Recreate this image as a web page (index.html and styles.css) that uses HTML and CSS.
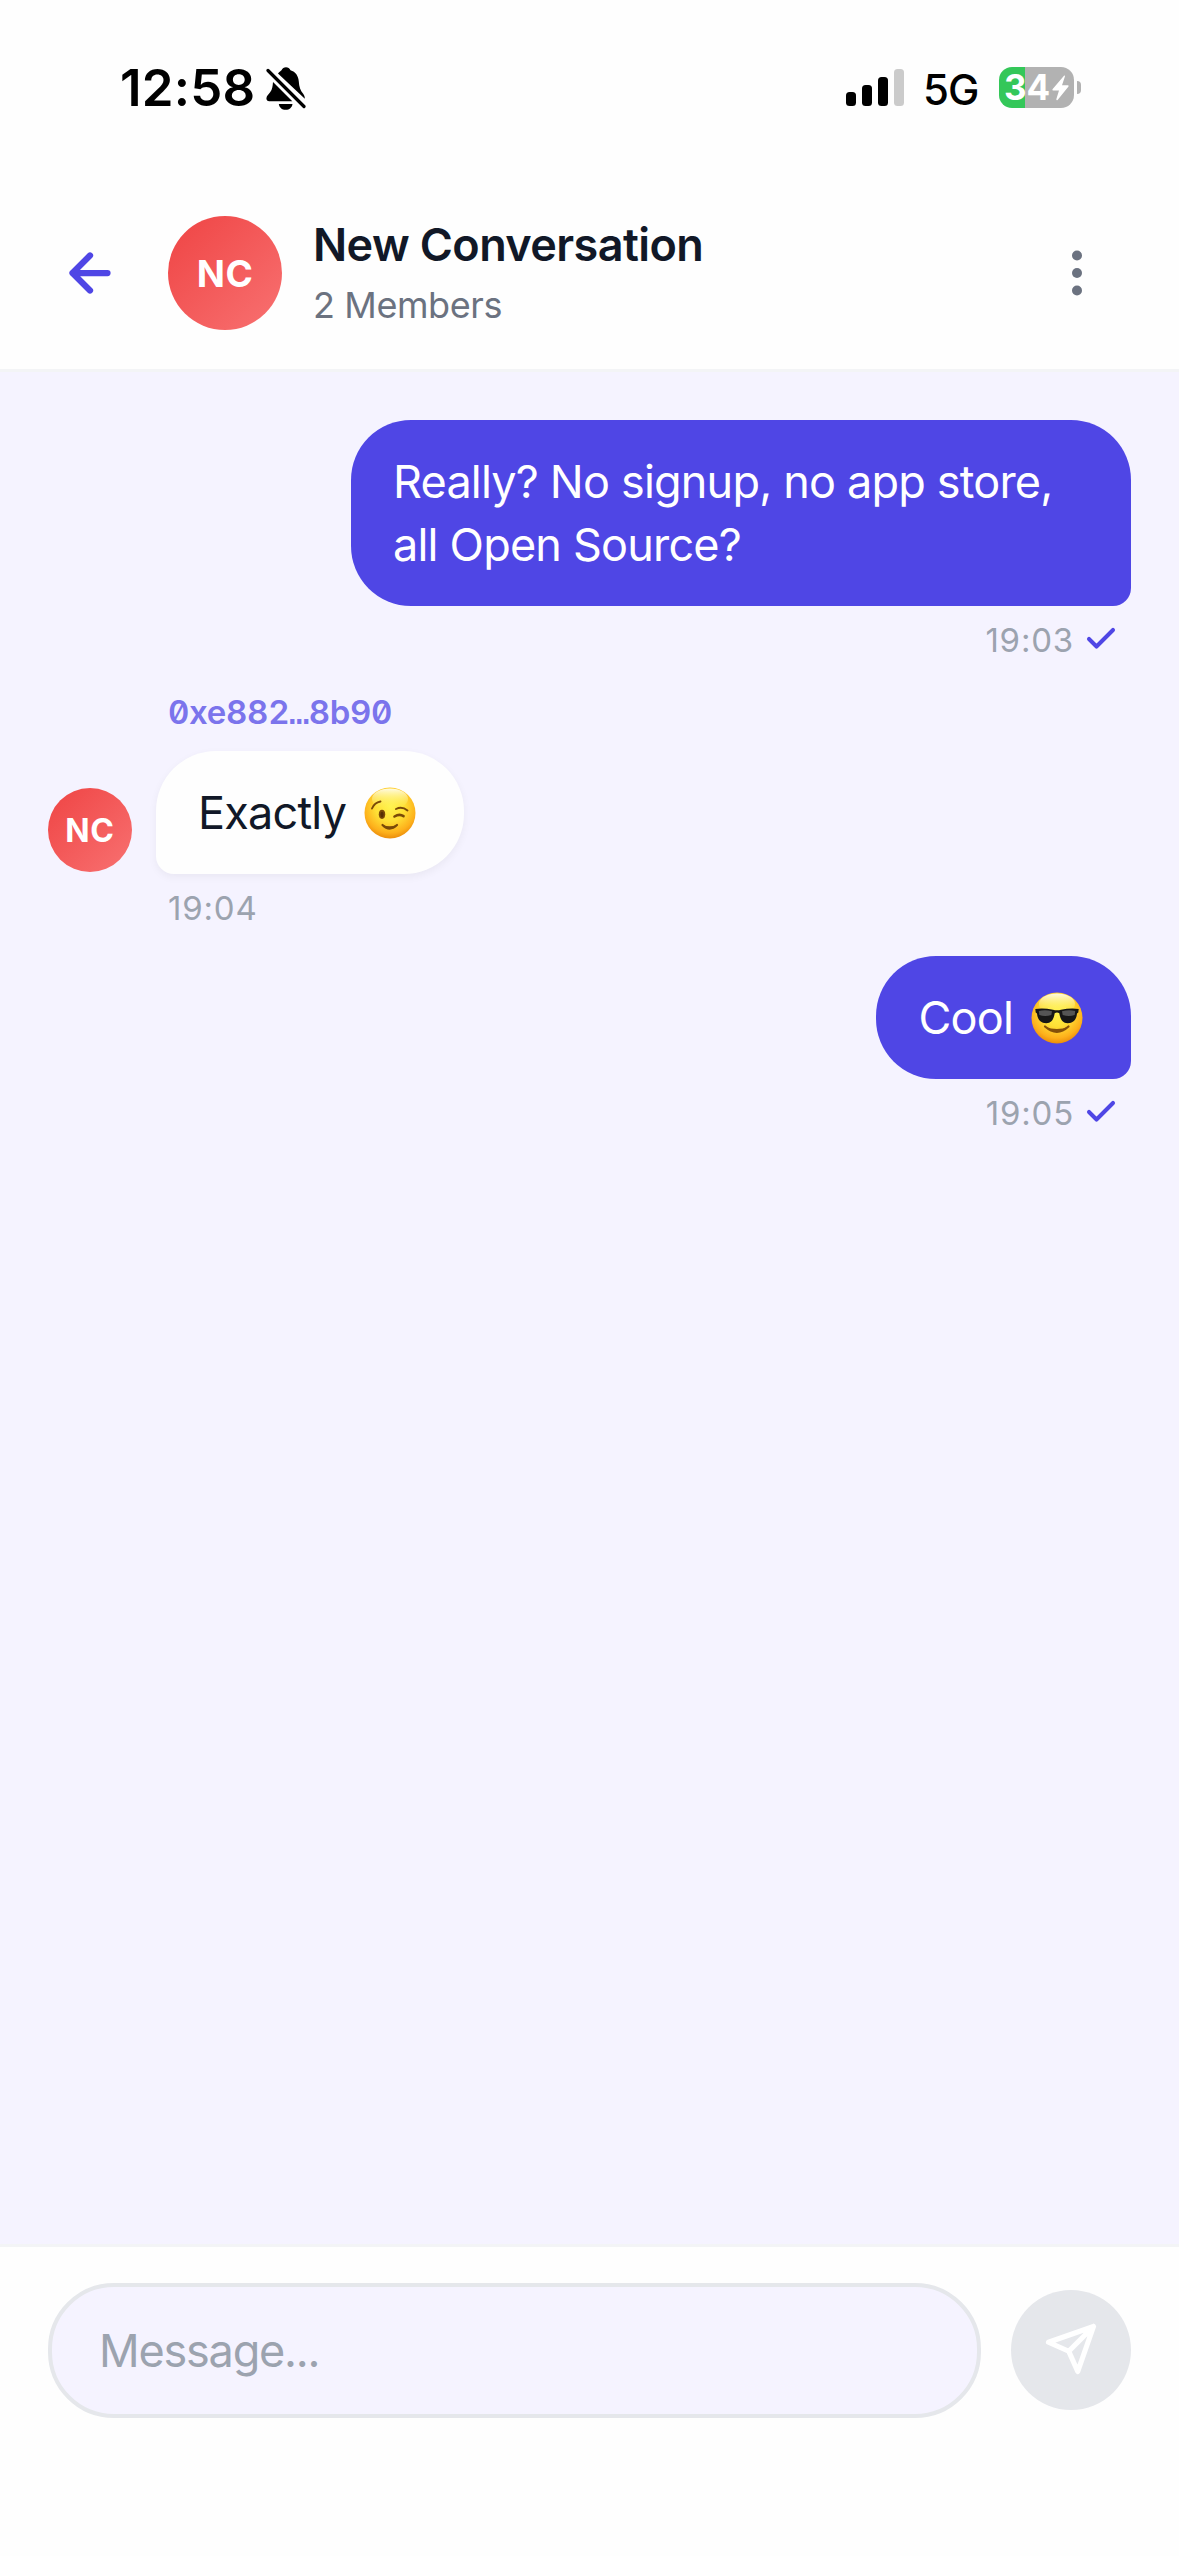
FILE: index.html
```html
<!DOCTYPE html>
<html lang="en">
<head>
<meta charset="utf-8">
<title>New Conversation</title>
<link rel="stylesheet" href="styles.css">
</head>
<body>
<div class="screen">
  <div class="status">
    <span class="clock">12:58</span>
    <svg class="bell" viewBox="0 0 40 44" width="40" height="44" aria-hidden="true">
      <path d="M12 6.500C13.500 4.500 14.800 4 15.500 3.200C16.300 1.200 18 .2 20 .2S23.700 1.200 24.500 3.200C29.500 4.600 32.500 9 32.800 14.500C33.100 20 34.500 23.500 37 26.500C38.200 28.200 38.900 29.800 38.800 31.800ZM7 15L26.300 34.300H3.200C1.500 34.300.4 33.200.4 31.600C.4 29 2.500 27.500 4.300 25C6.300 22.500 6.700 19 7 15ZM12.800 37H26.500C26 40.500 23.500 42.800 19.700 42.800S13.300 40.500 12.800 37Z"/>
      <path d="M2 3.500L38 39.500" stroke="#000" stroke-width="3.200" stroke-linecap="round"/>
    </svg>
    <div class="status-right">
      <div class="signal"><i class="bar b1"></i><i class="bar b2"></i><i class="bar b3"></i><i class="bar b4"></i></div>
      <span class="network">5G</span>
      <div class="battery">
        <span>34</span>
        <svg viewBox="0 0 17 26" width="17" height="26" aria-hidden="true"><path d="M12.200.5L.5 14.300Q0 15.500 1.200 15.500H7L4.300 24.300Q4.500 25.800 5.600 25L16.500 11.500Q17 10.200 15.800 10.200H10L13 1.300Q13 .2 12.200.5Z" fill="#fff"/></svg>
      </div>
      <i class="nub"></i>
    </div>
  </div>

  <header class="header">
    <button class="back" aria-label="Back">
      <svg viewBox="0 0 24 24" width="60" height="60"><path d="M19 12H5M12 19L5 12L12 5"/></svg>
    </button>
    <div class="avatar avatar-lg">NC</div>
    <div class="heading">
      <h1 class="title">New Conversation</h1>
      <p class="members">2 Members</p>
    </div>
    <button class="more" aria-label="More">
      <svg viewBox="0 0 24 24" width="60" height="60"><circle cx="12" cy="5" r="2"/><circle cx="12" cy="12" r="2"/><circle cx="12" cy="19" r="2"/></svg>
    </button>
  </header>

  <main class="messages">
    <div class="message sent">
      <div class="bubble bubble-wide">Really? No signup, no app store,<br>all Open Source?</div>
      <div class="meta"><span>19:03</span><svg class="check" viewBox="0 0 24 24" width="36" height="36"><path d="M20 6L9 17L4 12"/></svg></div>
    </div>

    <div class="incoming">
      <div class="avatar avatar-sm">NC</div>
      <div class="message received">
        <div class="sender">0xe882<span class="dots">…</span>8b90</div>
        <div class="bubble"><span>Exactly</span>
          <svg class="emoji" viewBox="0 0 52 52" width="52" height="52" role="img" aria-label="Winking face">
            <defs>
              <radialGradient id="face" cx=".5" cy=".38" r=".64">
                <stop offset="0" stop-color="#fff34e"/><stop offset=".45" stop-color="#ffdf35"/><stop offset=".8" stop-color="#fdb01b"/><stop offset="1" stop-color="#e88708"/>
              </radialGradient>
              <linearGradient id="shine" x1="0" y1="0" x2="0" y2="1">
                <stop offset="0" stop-color="#fffef0" stop-opacity=".95"/><stop offset="1" stop-color="#fff34e" stop-opacity="0"/>
              </linearGradient>
            </defs>
            <circle cx="26" cy="26" r="25.500" fill="url(#face)"/>
            <ellipse cx="26" cy="12" rx="18" ry="10.500" fill="url(#shine)"/>
            <g fill="none" stroke="#7a4a08" stroke-linecap="round" stroke-width="1.900">
              <path d="M8 21.500Q10.500 15.500 16.500 14.500"/><path d="M32 22Q38 19 43.500 23.500"/>
              <path d="M30.500 29.500Q35.500 26.500 39.500 29.200" stroke-width="2.600"/>
              <path d="M18.500 38Q25.500 45 33 38" stroke-width="2.200"/>
            </g>
            <path d="M18.500 38Q25.500 40.700 33 38Q25.500 45 18.500 38Z" fill="#7a4a08"/>
            <ellipse cx="18" cy="27.300" rx="3.200" ry="4.600" fill="#7a4a08"/>
            <ellipse cx="18" cy="27.600" rx="1.600" ry="2.800" fill="#573005"/>
          </svg>
        </div>
        <div class="meta"><span>19:04</span></div>
      </div>
    </div>

    <div class="message sent">
      <div class="bubble"><span>Cool</span>
        <svg class="emoji" viewBox="0 0 52 52" width="52" height="52" role="img" aria-label="Smiling face with sunglasses">
          <circle cx="26" cy="26" r="25.500" fill="url(#face)"/>
          <ellipse cx="26" cy="12" rx="18" ry="10.500" fill="url(#shine)"/>
          <path d="M14 34.500Q26 45 37.500 34.500" fill="none" stroke="#84500a" stroke-width="2.200" stroke-linecap="round"/>
          <path d="M14 34.500Q26 39.500 37.500 34.500Q26 45 14 34.500Z" fill="#84500a"/>
          <path d="M4.300 17Q12 15.700 22 17.700Q26 18.800 30 17.700Q40 15.700 47.700 17L47.300 20.500L46 21.500C45.500 27.500 42.500 31.200 36.700 31.200C31.500 31.200 29.200 27 28.300 21.200Q26 19.800 23.700 21.200C22.800 27 20.500 31.200 15.300 31.200C9.500 31.200 6.500 27.500 6 21.500L4.700 20.500Z" fill="#171717"/>
          <path d="M7.800 19Q14 17.200 21 19.200L20.300 23Q14 25 8.300 23ZM44.200 19Q38 17.200 31 19.200L31.700 23Q38 25 43.700 23Z" fill="#777" opacity=".65"/>
        </svg>
      </div>
      <div class="meta"><span>19:05</span><svg class="check" viewBox="0 0 24 24" width="36" height="36"><path d="M20 6L9 17L4 12"/></svg></div>
    </div>
  </main>

  <footer class="composer">
    <div class="field">Message...</div>
    <button class="send" aria-label="Send">
      <svg viewBox="0 0 24 24" width="54" height="54"><path d="M22 2L11 13M22 2L15 22L11 13L2 9Z"/></svg>
    </button>
  </footer>
</div>
</body>
</html>
```
FILE: styles.css
```css
* { box-sizing: border-box; }
body { margin: 0; font-family: Inter, "Liberation Sans", sans-serif; color: #111827; }
button { border: 0; padding: 0; background: none; display: flex; align-items: center; justify-content: center; }
svg { display: block; flex: none; }

.screen { width: 1179px; height: 2556px; display: flex; flex-direction: column; background: #fefefe; }

.status { height: 177px; padding: 58px 98px 0 120px; display: flex; align-items: flex-start; color: #000; }
.clock { width: 146px; font-size: 51px; font-weight: 600; line-height: 60px; letter-spacing: .2px; white-space: nowrap; }
.bell { margin-top: 9px; }
.status-right { margin-left: auto; display: flex; align-items: flex-start; }
.signal { height: 37px; margin-top: 11px; display: flex; align-items: flex-end; gap: 6px; }
.bar { width: 10px; border-radius: 3.500px; background: #000; }
.b1 { height: 14px; }
.b2 { height: 21px; }
.b3 { height: 29px; }
.b4 { height: 37px; background: #cbcbcb; }
.network { width: 76px; margin-left: 19px; font-size: 42px; font-weight: 500; line-height: 63px; letter-spacing: -1px; }
.battery { width: 75px; height: 41px; margin-top: 9px; padding-left: 5px; display: flex; align-items: center; gap: 2px; border-radius: 13px; background: linear-gradient(90deg, #34c759 26px, #b2b2b2 26px); color: #fff; }
.battery span { width: 46px; font-size: 35px; font-weight: 700; line-height: 41px; }
.nub { width: 4px; height: 13px; margin: 23px 0 0 3px; border-radius: 0 5px 5px 0; background: #b2b2b2; }

.header { height: 195px; padding: 0 48px; display: flex; align-items: center; border-bottom: 3px solid #f3f4f6; }
.back { width: 84px; height: 84px; margin-right: 36px; }
.back path { fill: none; stroke: #4f46e5; stroke-width: 2.500; stroke-linecap: round; stroke-linejoin: round; }
.avatar { flex: none; display: flex; align-items: center; justify-content: center; border-radius: 50%; background: linear-gradient(135deg, #ef4444, #f87171); color: #fff; font-weight: 650; }
.avatar-lg { width: 114px; height: 114px; font-size: 37px; letter-spacing: .5px; }
.avatar-sm { width: 84px; height: 84px; margin: 0 24px 57px 0; font-size: 32px; letter-spacing: .8px; }
.heading { flex: 1; margin-left: 31px; display: flex; flex-direction: column; gap: 9px; }
.title { margin: 0; font-size: 45px; font-weight: 600; line-height: 54px; letter-spacing: -.6px; }
.members { margin: 0; font-size: 36px; line-height: 48px; letter-spacing: -.4px; color: #6b7280; }
.more { width: 108px; height: 84px; }
.more svg { fill: #6b7280; }

.messages { flex: 1; padding: 48px; display: flex; flex-direction: column; background: #f5f3ff; }
.message { display: flex; flex-direction: column; }
.sent { align-items: flex-end; }
.received { align-items: flex-start; }
.incoming { margin: 30px 0 27px; display: flex; align-items: flex-end; }
.bubble { padding: 30px 42px; display: flex; border-radius: 60px; font-size: 45px; line-height: 63px; letter-spacing: -.8px; white-space: nowrap; }
.bubble-wide { display: block; width: 780px; }
.sent .bubble { border-bottom-right-radius: 18px; background: #4f46e5; color: #fff; }
.received .bubble { border-bottom-left-radius: 18px; background: #fefefe; box-shadow: 0 3px 9px rgba(0, 0, 0, .05); }
.emoji { margin: 6px 6px 0 18px; }
.meta { height: 42px; margin: 13px 12px 0; display: flex; align-items: center; gap: 9px; font-size: 33px; line-height: 42px; letter-spacing: .8px; color: #9ca3af; }
.check { margin-bottom: 2px; fill: none; stroke: #4f46e5; stroke-width: 2.700; stroke-linecap: round; stroke-linejoin: round; }
.sender { height: 42px; margin: 0 12px 18px; font-size: 33px; font-weight: 600; line-height: 42px; letter-spacing: -.3px; font-feature-settings: "zero", "tnum"; color: #7b74ec; }
.dots { font-family: "Liberation Mono", monospace; font-weight: 700; line-height: 1; }

.composer { height: 312px; padding: 36px 48px 0; display: flex; align-items: flex-start; gap: 30px; border-top: 3px solid #f3f4f6; }
.field { flex: 1; height: 135px; padding: 0 47px; border: 4px solid #e5e7eb; border-radius: 66px; background: #f5f3ff; font-size: 45px; line-height: 128px; letter-spacing: -1.2px; color: #9ca3af; }
.send { width: 120px; height: 120px; margin-top: 7px; padding-bottom: 2px; border-radius: 50%; background: #e5e7eb; }
.send path { fill: none; stroke: #fff; stroke-width: 2.300; stroke-linecap: round; stroke-linejoin: round; }
```
